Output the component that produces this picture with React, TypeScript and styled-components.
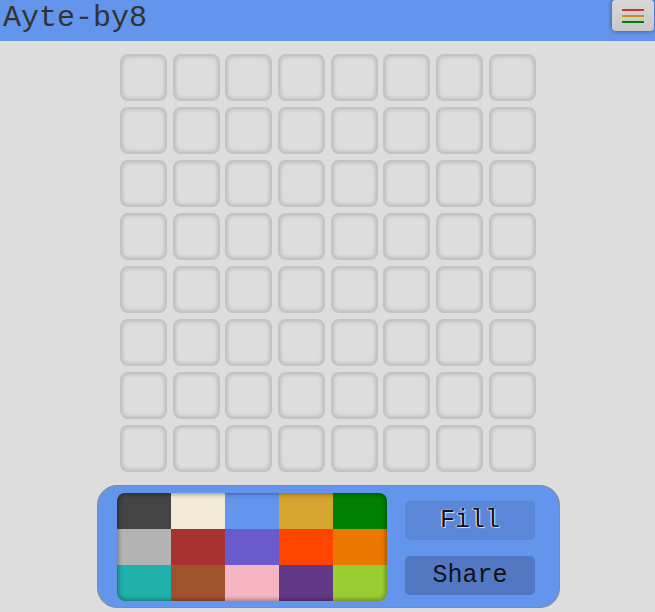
import React from "react";
import styled, { createGlobalStyle } from "styled-components";

const Global = createGlobalStyle`
  html, body { margin: 0; padding: 0; background: #dddddd; }
  body { font-family: "Liberation Mono", "Courier New", monospace; }
`;

const Header = styled.header`
  height: 41px;
  background: #6495ed;
  display: flex;
  align-items: flex-start;
  justify-content: space-between;
  padding-left: 3px;
  padding-right: 1px;
  box-sizing: border-box;
`;

const Title = styled.h1`
  margin: 0;
  font-family: "Courier New", "Liberation Mono", monospace;
  font-weight: normal;
  font-size: 30px;
  line-height: 37px;
  color: #333;
`;

const MenuButton = styled.button`
  width: 42px;
  height: 31px;
  border: none;
  border-radius: 4px;
  background: linear-gradient(#d8d8d8, #c8c8c8);
  box-shadow: 0 0 4px 1px rgba(0, 0, 0, 0.3);
  display: flex;
  flex-direction: column;
  align-items: center;
  justify-content: center;
  gap: 4px;
  padding: 0;
`;

const MenuLine = styled.span<{ $c: string }>`
  display: block;
  width: 22px;
  height: 2px;
  background: ${(p) => p.$c};
`;

const Board = styled.div`
  margin: 13px auto 0;
  width: 417px;
  display: grid;
  grid-template-columns: repeat(8, 47px);
  grid-auto-rows: 47px;
  column-gap: 5.7px;
  row-gap: 6px;
  transform: translateX(1px);
`;

const Cell = styled.div`
  box-sizing: border-box;
  border: 2px solid #c3c3c3;
  border-radius: 8px;
  background: #dddddd;
  box-shadow: inset 0 0 4px rgba(0, 0, 0, 0.2);
`;

const Panel = styled.div`
  margin: 13px auto 0;
  width: 463px;
  height: 123px;
  box-sizing: border-box;
  background: #6495ed;
  border: 1px solid #8a8a8a;
  border-radius: 20px;
  display: flex;
  align-items: flex-start;
  padding: 7px 24px 0 19px;
  transform: translateX(1px);
`;

const Palette = styled.div`
  position: relative;
  display: grid;
  grid-template-columns: repeat(5, 54px);
  grid-auto-rows: 36px;
  border-radius: 8px;
  overflow: hidden;
  &::after {
    content: "";
    position: absolute;
    inset: 0;
    border-radius: 8px;
    box-shadow: inset 0 0 5px 1px rgba(0, 0, 0, 0.4);
    pointer-events: none;
  }
`;

const Swatch = styled.div<{ $c: string }>`
  background: ${(p) => p.$c};
`;

const Actions = styled.div`
  margin-left: 18px;
  margin-top: 8px;
  display: flex;
  flex-direction: column;
  gap: 16px;
`;

const ActionButton = styled.button<{ $bg: string; $glow?: boolean }>`
  width: 130px;
  height: 39px;
  border: none;
  border-radius: 5px;
  background: ${(p) => p.$bg};
  font-family: "Courier New", "Liberation Mono", monospace;
  font-size: 25px;
  color: #111;
  padding: 0;
  text-shadow: ${(p) =>
    p.$glow ? "0 0 1px #ffffff, 1px 1px 1px #d4e2ff, -1px 0 1px #d4e2ff" : "none"};
`;

const colors = [
  "#444444", "#f0ead6", "#6495ed", "#d6a530", "#008000",
  "#b3b3b3", "#a83232", "#6a5acd", "#ff4500", "#ec7800",
  "#20b2aa", "#a0522d", "#f6b5c3", "#633887", "#9acd32",
];

export default function App() {
  return (
    <>
      <Global />
      <Header>
        <Title>Ayte-by8</Title>
        <MenuButton aria-label="menu">
          <MenuLine $c="#cc3333" />
          <MenuLine $c="#c8900a" />
          <MenuLine $c="#008000" />
        </MenuButton>
      </Header>
      <Board>
        {Array.from({ length: 64 }).map((_, i) => (
          <Cell key={i} />
        ))}
      </Board>
      <Panel>
        <Palette>
          {colors.map((c) => (
            <Swatch key={c} $c={c} />
          ))}
        </Palette>
        <Actions>
          <ActionButton $bg="#5a87d8" $glow>Fill</ActionButton>
          <ActionButton $bg="#5278c4">Share</ActionButton>
        </Actions>
      </Panel>
    </>
  );
}
